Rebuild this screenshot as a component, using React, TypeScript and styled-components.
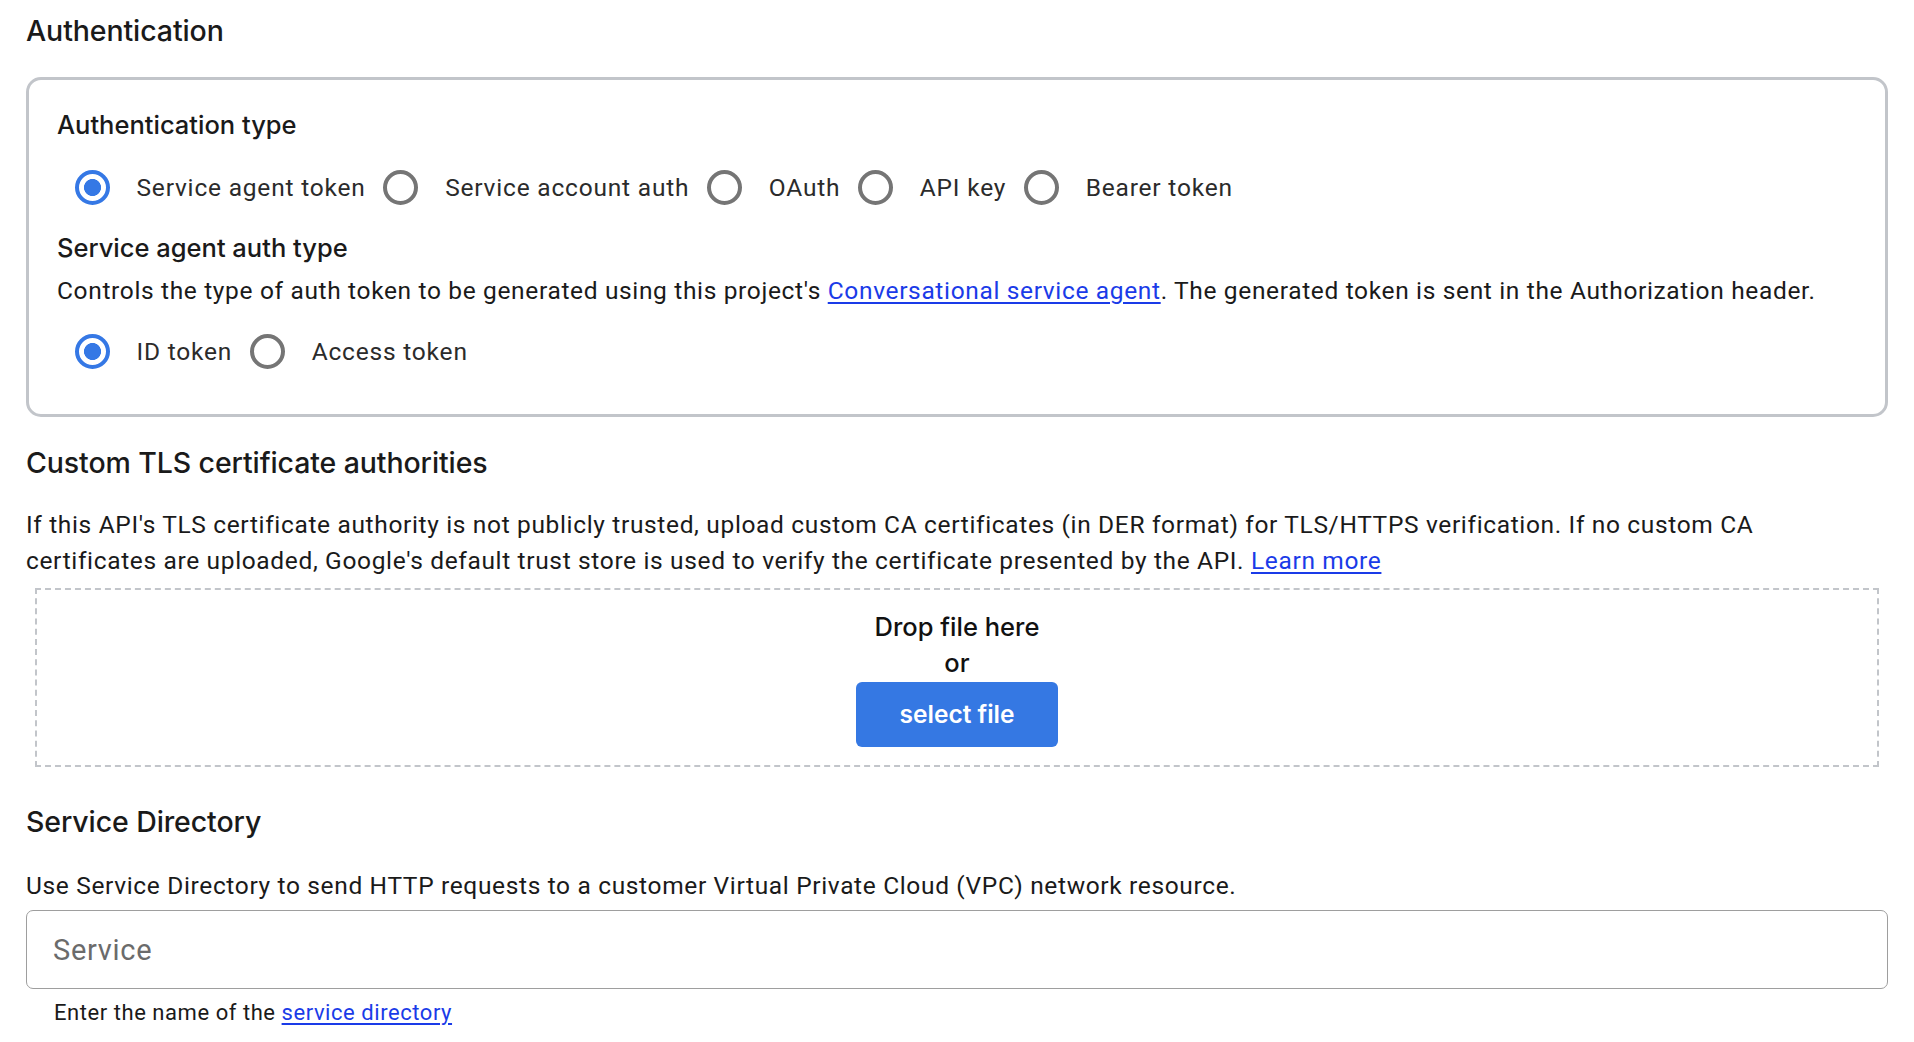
import React from "react";
import styled, { createGlobalStyle } from "styled-components";

const GlobalStyle = createGlobalStyle`
  html, body { margin: 0; padding: 0; background: #ffffff; }
  body { font-family: Roboto, "Liberation Sans", sans-serif; color: #1f1f1f; }
  * { box-sizing: border-box; }
`;

const Page = styled.div`
  padding: 13px 26px 0;
  display: flex;
  flex-direction: column;
`;

const SectionTitle = styled.h2<{ $mt?: number }>`
  margin: ${(p) => p.$mt ?? 0}px 0 0;
  font-family: Inter, "Open Sans", sans-serif;
  font-weight: 500;
  font-size: 28.5px;
  line-height: 36px;
  color: #1a1a1a;
  letter-spacing: -0.1px;
`;

const Card = styled.div`
  margin-top: 28px;
  border: 3px solid #c2c5ca;
  border-radius: 15px;
  padding: 27px 28px 28px;
  display: flex;
  flex-direction: column;
`;

const SubTitle = styled.h3<{ $mt?: number }>`
  margin: ${(p) => p.$mt ?? 0}px 0 0;
  font-family: Inter, "Open Sans", sans-serif;
  font-weight: 500;
  font-size: 25.5px;
  line-height: 35px;
  color: #1a1a1a;
`;

const Text = styled.p<{ $mt?: number }>`
  margin: ${(p) => p.$mt ?? 0}px 0 0;
  font-size: 24.5px;
  line-height: 35px;
  color: #1a1a1a;
  letter-spacing: 0.65px;
`;

const Paragraph = styled(Text)`
  line-height: 36px;
`;

const Link = styled.a`
  color: #1a3be8;
  text-decoration: underline;
  text-underline-offset: 3px;
  cursor: pointer;
`;

const RadioGroup = styled.div<{ $mt?: number }>`
  margin-top: ${(p) => p.$mt ?? 0}px;
  display: flex;
  align-items: center;
  height: 70px;
`;

const RadioItem = styled.label`
  display: inline-flex;
  align-items: center;
  cursor: pointer;
`;

const Target = styled.span`
  width: 70px;
  height: 70px;
  display: inline-flex;
  align-items: center;
  justify-content: center;
`;

const RadioInput = styled.input`
  appearance: none;
  -webkit-appearance: none;
  margin: 0;
  width: 35px;
  height: 35px;
  border-radius: 50%;
  border: 4px solid #757575;
  background: #fff;
  cursor: pointer;
  &:checked {
    border-color: #3578e5;
    background: radial-gradient(circle, #3578e5 0 8.2px, #fff 8.8px);
  }
`;

const RadioLabel = styled.span`
  padding-left: 9.5px;
  font-size: 24.5px;
  line-height: 35px;
  color: #2b2b2b;
  letter-spacing: 0.8px;
`;

const DropZone = styled.div`
  margin: 9px 9px 0;
  border: 2px dashed #c2c5ca;
  padding: 18.5px 0 18.5px;
  display: flex;
  flex-direction: column;
  align-items: center;
`;

const DropText = styled.div`
  font-family: Inter, "Open Sans", sans-serif;
  font-weight: 500;
  font-size: 25.5px;
  line-height: 36px;
  color: #111;
`;

const SelectButton = styled.button`
  margin-top: 1px;
  width: 202px;
  height: 65px;
  border: none;
  border-radius: 6px;
  background: #3578e3;
  color: #fff;
  font-family: Inter, "Open Sans", sans-serif;
  font-weight: 600;
  font-size: 24.5px;
  cursor: pointer;
`;

const InputBox = styled.div`
  margin-top: 7px;
  height: 79px;
  border: 1px solid #9e9e9e;
  border-radius: 7px;
  display: flex;
  align-items: center;
  padding: 0 26px;
`;

const TextInput = styled.input`
  flex: 1;
  border: none;
  outline: none;
  background: transparent;
  font-family: Roboto, "Liberation Sans", sans-serif;
  font-size: 29px;
  letter-spacing: 0.7px;
  color: #1f1f1f;
  padding: 0;
  &::placeholder { color: #6b6b6b; }
`;

const Helper = styled.div`
  margin-top: 10px;
  padding-left: 28px;
  font-size: 22px;
  line-height: 28px;
  letter-spacing: 0.55px;
  color: #1a1a1a;
`;

type RadioOpt = { label: string; checked?: boolean };

const Radios: React.FC<{ name: string; options: RadioOpt[]; mt?: number }> = ({ name, options, mt }) => (
  <RadioGroup $mt={mt}>
    {options.map((o) => (
      <RadioItem key={o.label}>
        <Target>
          <RadioInput type="radio" name={name} defaultChecked={o.checked} />
        </Target>
        <RadioLabel>{o.label}</RadioLabel>
      </RadioItem>
    ))}
  </RadioGroup>
);

export default function App() {
  return (
    <>
      <GlobalStyle />
      <Page>
        <SectionTitle>Authentication</SectionTitle>
        <Card>
          <SubTitle>Authentication type</SubTitle>
          <Radios
            name="authType"
            mt={10}
            options={[
              { label: "Service agent token", checked: true },
              { label: "Service account auth" },
              { label: "OAuth" },
              { label: "API key" },
              { label: "Bearer token" },
            ]}
          />
          <SubTitle $mt={8}>Service agent auth type</SubTitle>
          <Text $mt={8}>
            Controls the type of auth token to be generated using this project's{" "}
            <Link>Conversational service agent</Link>. The generated token is sent in the Authorization header.
          </Text>
          <Radios
            name="saType"
            mt={8}
            options={[{ label: "ID token", checked: true }, { label: "Access token" }]}
          />
        </Card>

        <SectionTitle $mt={28}>Custom TLS certificate authorities</SectionTitle>
        <Paragraph $mt={26}>
          If this API's TLS certificate authority is not publicly trusted, upload custom CA certificates (in DER
          format) for TLS/HTTPS verification. If no custom CA certificates are uploaded, Google's default trust store
          is used to verify the certificate presented by the API. <Link>Learn more</Link>
        </Paragraph>
        <DropZone>
          <DropText>Drop file here</DropText>
          <DropText>or</DropText>
          <SelectButton type="button">select file</SelectButton>
        </DropZone>

        <SectionTitle $mt={37}>Service Directory</SectionTitle>
        <Text $mt={28}>
          Use Service Directory to send HTTP requests to a customer Virtual Private Cloud (VPC) network resource.
        </Text>
        <InputBox>
          <TextInput placeholder="Service" />
        </InputBox>
        <Helper>
          Enter the name of the <Link>service directory</Link>
        </Helper>
      </Page>
    </>
  );
}
